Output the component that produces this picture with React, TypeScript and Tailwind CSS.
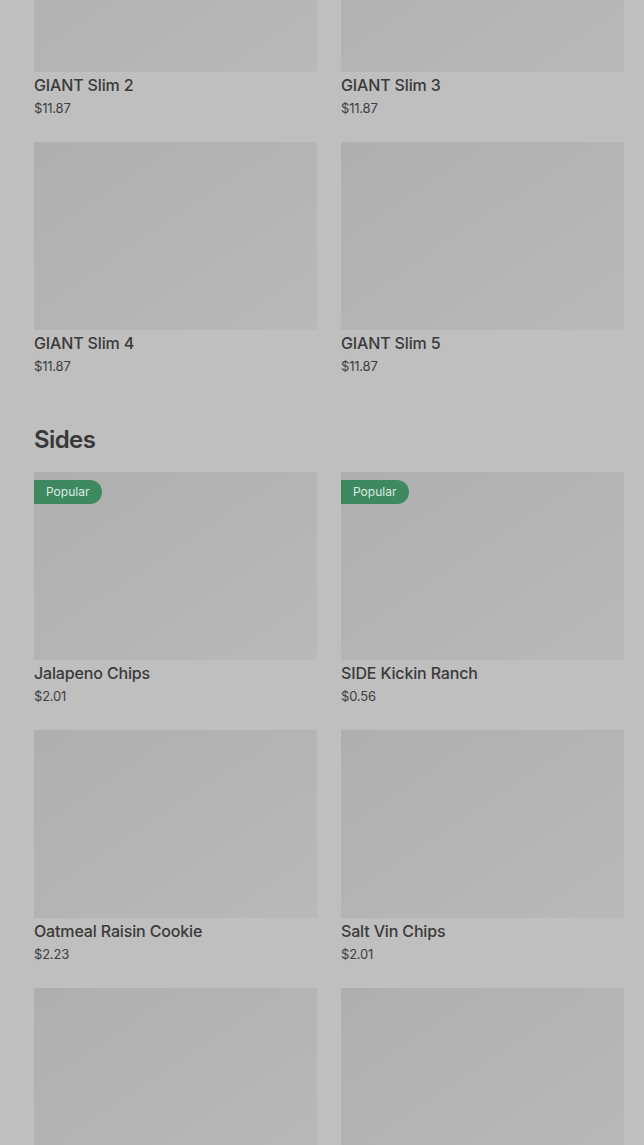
import React from 'react'

type Item = {
  name:     string
  price:    string
  popular?: boolean
}

const topItems: Item[] = [
  { name: 'GIANT Slim 2', price: '$11.87' },
  { name: 'GIANT Slim 3', price: '$11.87' },
  { name: 'GIANT Slim 4', price: '$11.87' },
  { name: 'GIANT Slim 5', price: '$11.87' },
]

const sides: Item[] = [
  { name: 'Jalapeno Chips',        price: '$2.01',  popular: true },
  { name: 'SIDE Kickin Ranch',     price: '$0.56',  popular: true },
  { name: 'Oatmeal Raisin Cookie', price: '$2.23' },
  { name: 'Salt Vin Chips',        price: '$2.01' },
  { name: '',                      price: '' },
  { name: '',                      price: '' },
]

function ItemCard({ item }: { item: Item }) {
  return (
    <div className="flex flex-col h-[258px]">
      {/* image placeholder */}
      <div className="relative h-[188px] bg-gradient-to-br from-[#afafaf] to-[#b9b9b9]">
        {item.popular && (
          <span className="absolute left-0 top-[8px] h-[24px] w-[68px] flex items-center pl-[12px] rounded-r-full bg-[#3f8961] text-[12px] text-[#dcebe2]">
            Popular
          </span>
        )}
      </div>
      <div className="pt-[3px] text-[16px] leading-5 font-medium tracking-[-0.15px] text-[#3a3a3a]">{item.name}</div>
      <div className="mt-[4px] text-[13px] leading-[18px] tracking-[-0.2px] text-[#3e3e3e]">{item.price}</div>
    </div>
  )
}

export default function App() {
  return (
    <div
      className="h-[1145px] overflow-hidden bg-[#bfbfbf] pl-[34px] pr-[20px]"
      style={{ fontFamily: 'Inter, "Liberation Sans", sans-serif' }}
    >
      <div className="mt-[-116px] grid grid-cols-2 gap-x-[24px]">
        {topItems.map((it, i) => <ItemCard key={i} item={it} />)}
      </div>

      <h2 className="mt-[24px] mb-[16px] text-[24px] leading-8 font-semibold tracking-[-0.6px] text-[#383838]">
        Sides
      </h2>

      <div className="grid grid-cols-2 gap-x-[24px]">
        {sides.map((it, i) => <ItemCard key={i} item={it} />)}
      </div>
    </div>
  )
}
